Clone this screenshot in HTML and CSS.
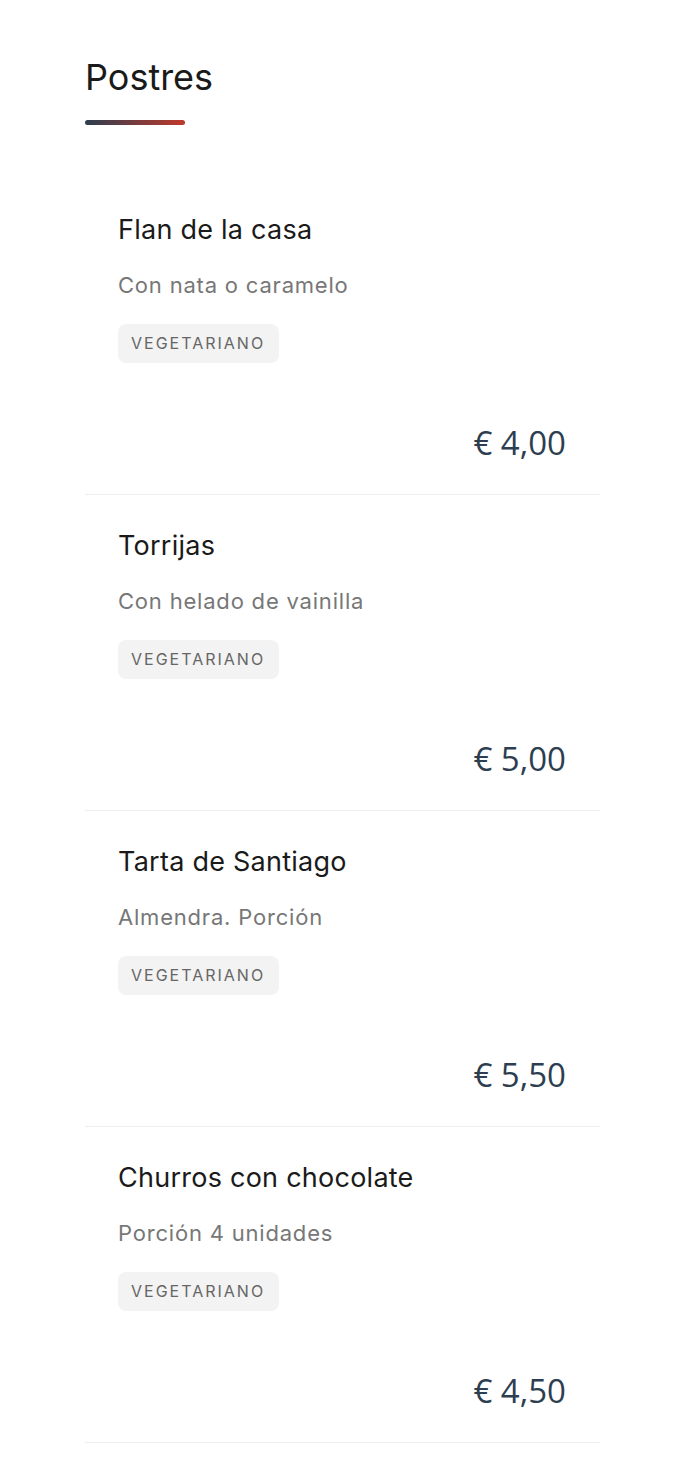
FILE: index.html
```html
<!DOCTYPE html>
<html lang="es">

<head>
    <meta charset="UTF-8">
    <meta name="viewport" content="width=device-width, initial-scale=1.0">
    <title>Postres</title>
    <link rel="stylesheet" href="styles.css">
</head>

<body>

    <section class="menu-section">
        <h2 class="section-title">Postres</h2>

        <div class="menu-list">
            <div class="menu-item">
                <h3 class="item-name">Flan de la casa</h3>
                <p class="item-desc">Con nata o caramelo</p>
                <span class="tag">Vegetariano</span>
                <div class="item-price">€ 4,00</div>
            </div>
            <div class="menu-item">
                <h3 class="item-name">Torrijas</h3>
                <p class="item-desc">Con helado de vainilla</p>
                <span class="tag">Vegetariano</span>
                <div class="item-price">€ 5,00</div>
            </div>
            <div class="menu-item">
                <h3 class="item-name">Tarta de Santiago</h3>
                <p class="item-desc">Almendra. Porción</p>
                <span class="tag">Vegetariano</span>
                <div class="item-price">€ 5,50</div>
            </div>
            <div class="menu-item">
                <h3 class="item-name">Churros con chocolate</h3>
                <p class="item-desc">Porción 4 unidades</p>
                <span class="tag">Vegetariano</span>
                <div class="item-price">€ 4,50</div>
            </div>
        </div>
    </section>

</body>

</html>
```

FILE: styles.css
```css
body {
    font-family: Inter, "Noto Sans", sans-serif;
    margin: 0;
    padding: 0;
    background: #ffffff;
    color: #1a1a1a;
}

.menu-section {
    width: 515px;
    padding: 56px 0 0 85px;
}

.section-title {
    font-size: 36px;
    font-weight: 400;
    line-height: 1.2;
    margin: 0;
    padding-bottom: 26px;
}

.section-title::after {
    content: "";
    display: block;
    width: 100px;
    height: 5px;
    margin-top: 21px;
    border-radius: 3px;
    background: linear-gradient(90deg, #2c3e50, #c0392b);
}

.menu-list {
    margin-top: 28px;
}

.menu-item {
    display: flex;
    flex-direction: column;
    align-items: flex-start;
    padding: 35px 34px 32px 33px;
    border-bottom: 1px solid #eeeeee;
}

.item-name {
    font-size: 27px;
    font-weight: 400;
    letter-spacing: 0.25px;
    line-height: 1.2;
    margin: 0;
}

.item-desc {
    font-size: 22px;
    line-height: 1.5;
    letter-spacing: 0.8px;
    color: #777;
    margin: 22px 0 22px;
}

.tag {
    display: inline-block;
    font-size: 16px;
    letter-spacing: 2px;
    text-transform: uppercase;
    color: #666;
    background: #f3f3f3;
    border-radius: 8px;
    padding: 10px 14px 10px 13px;
    line-height: 19px;
}

.item-price {
    align-self: flex-end;
    font-family: "Open Sans", sans-serif;
    font-size: 33px;
    line-height: 1.2;
    color: #2c3e50;
    margin-top: 60px;
}
```
